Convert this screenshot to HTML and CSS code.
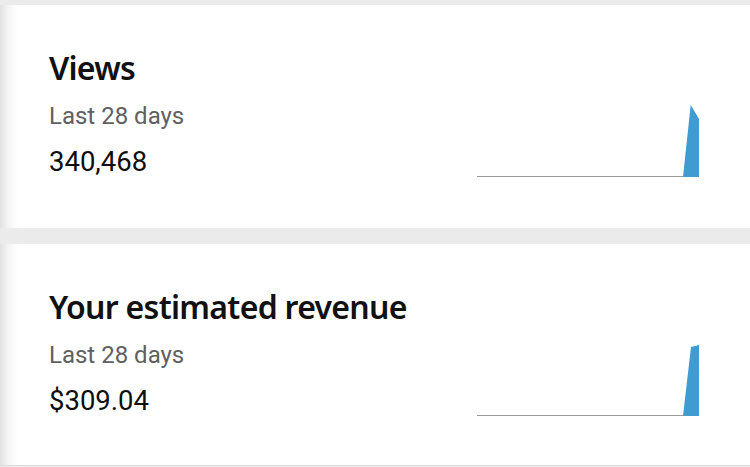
FILE: index.html
```html
<!DOCTYPE html>
<html>
<head>
<meta charset="utf-8">
<link rel="stylesheet" href="styles.css">
</head>
<body>
<div class="list">
  <section class="card">
    <div class="info">
      <h2 class="title">Views</h2>
      <div class="period">Last 28 days</div>
      <div class="value">340,468</div>
    </div>
    <svg class="spark" width="222" height="72" viewBox="0 0 222 72">
      <line x1="0" y1="71.5" x2="206" y2="71.5" stroke="#9a9a9a" stroke-width="1"/>
      <polygon points="206,72 213.7,0 222,14 222,72" fill="#3f9bd0"/>
    </svg>
  </section>
  <section class="card">
    <div class="info">
      <h2 class="title">Your estimated revenue</h2>
      <div class="period">Last 28 days</div>
      <div class="value">$309.04</div>
    </div>
    <svg class="spark" width="222" height="72" viewBox="0 0 222 72">
      <line x1="0" y1="71.5" x2="206" y2="71.5" stroke="#9a9a9a" stroke-width="1"/>
      <polygon points="206,72 214,3 222,1 222,72" fill="#3f9bd0"/>
    </svg>
  </section>
</div>
</body>
</html>
```

FILE: styles.css
```css
html, body {
  margin: 0;
  padding: 0;
}
body {
  background: #ebebeb;
  width: 750px;
  height: 467px;
  overflow: hidden;
}
.list {
  display: flex;
  flex-direction: column;
  gap: 16px;
  padding-top: 5px;
}
.card {
  height: 223px;
  box-sizing: border-box;
  background: linear-gradient(to right, #e0e0e0 0px, #f4f4f4 8px, #ffffff 18px);
  display: flex;
  justify-content: space-between;
  align-items: flex-start;
  padding: 45px 51px 0 49px;
}
.card + .card {
  height: 222px;
  border-bottom: 1px solid #dcdcdc;
}
.info {
  display: flex;
  flex-direction: column;
}
.title {
  margin: 0;
  font-family: "Noto Sans", sans-serif;
  font-weight: 600;
  font-size: 32px;
  line-height: 36px;
  color: #111111;
  letter-spacing: -0.7px;
}
.period {
  margin-top: 16px;
  font-family: Roboto, "Noto Sans", sans-serif;
  font-size: 24px;
  line-height: 28px;
  color: #606060;
}
.value {
  margin-top: 16px;
  font-family: Roboto, "Noto Sans", sans-serif;
  font-size: 27.5px;
  line-height: 32px;
  color: #0f0f0f;
}
.spark {
  display: block;
  margin-top: 55px;
}
```
